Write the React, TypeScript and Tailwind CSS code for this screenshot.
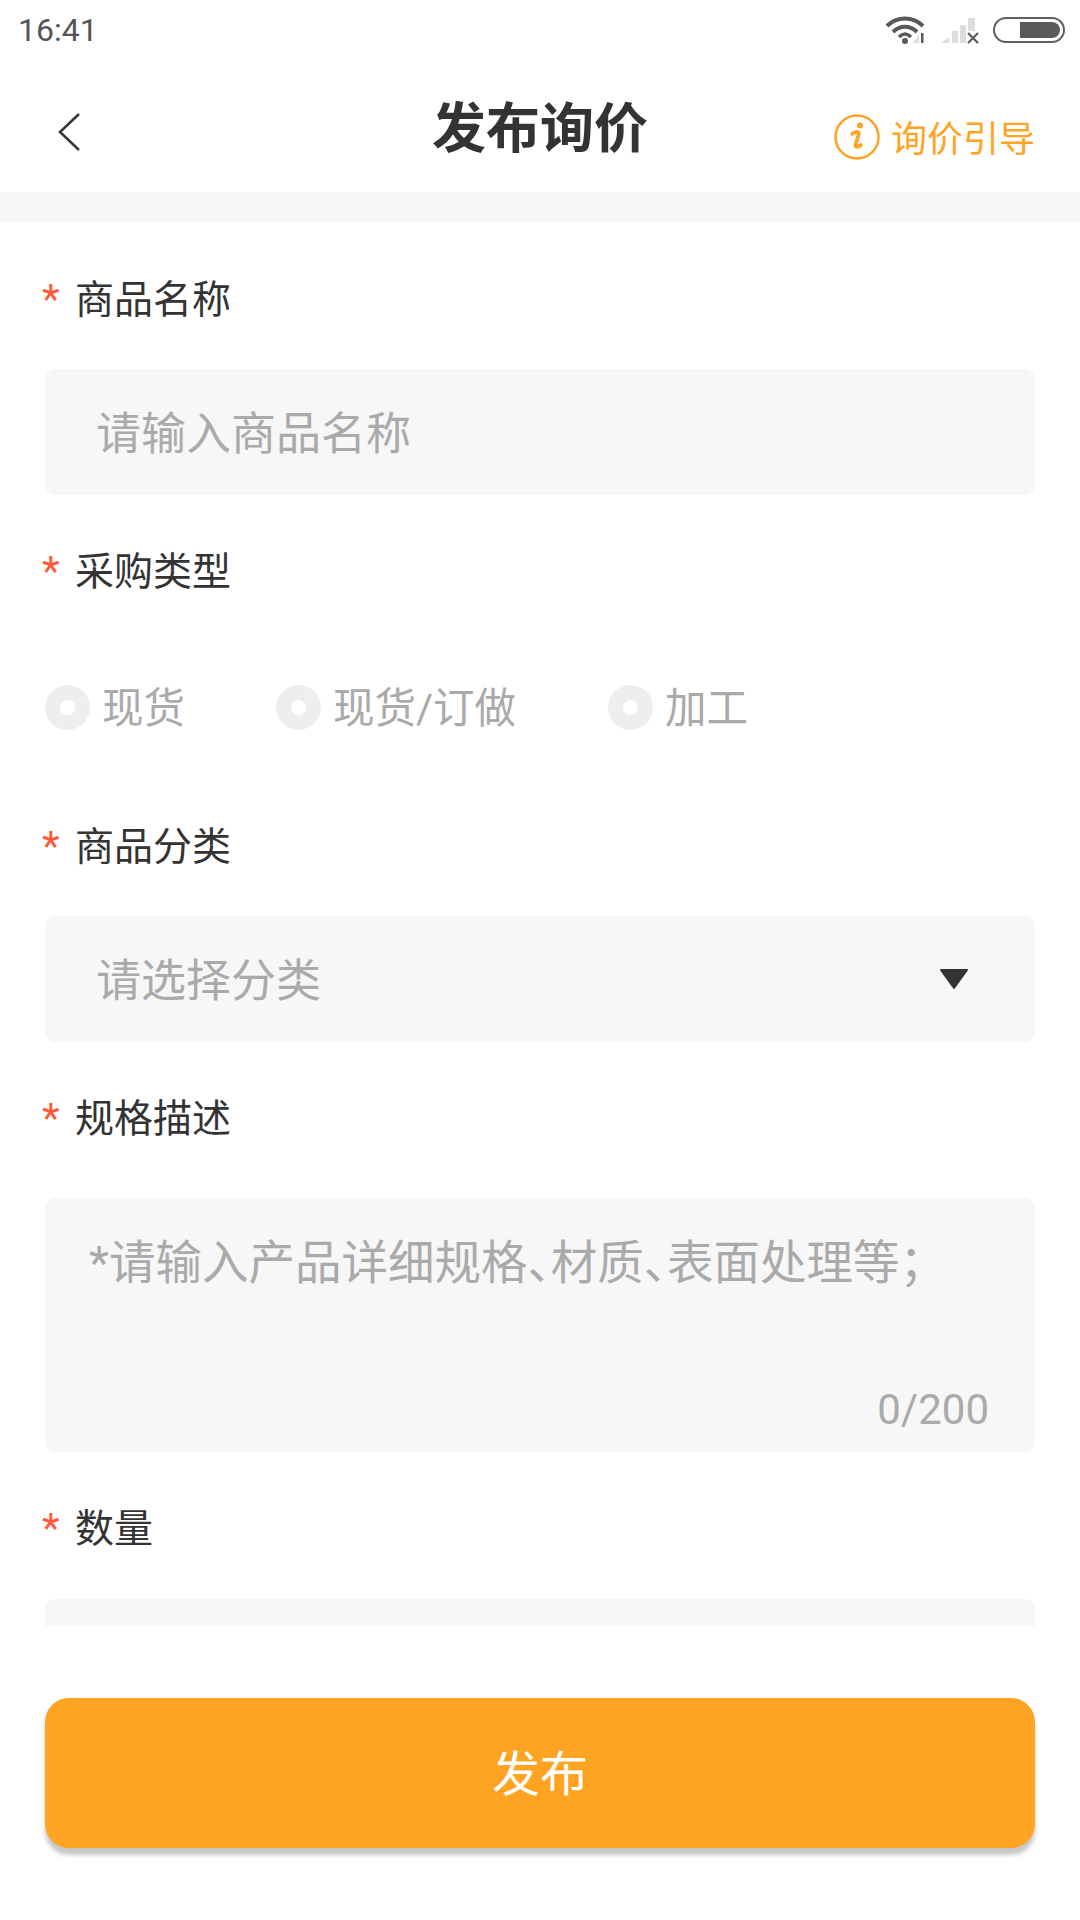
import React from "react";

const cjk = "font-['Roboto','Noto_Sans_CJK_SC',sans-serif]";

function Label({ text }: { text: string }) {
  return (
    <div className="flex h-[72px] items-center pl-[42px]">
      <span className="relative top-[1px] w-[33px] text-[41px] leading-none text-[#ff5a3c]">*</span>
      <span className="relative top-[2px] text-[39px] leading-none text-[#333333]">{text}</span>
    </div>
  );
}

function Radio({ text, className }: { text: string; className: string }) {
  return (
    <div className={`flex items-center ${className}`}>
      <span className="flex h-[45px] w-[45px] items-center justify-center rounded-full bg-[#eeeeee]">
        <span className="h-[15px] w-[15px] rounded-full bg-white" />
      </span>
      <span className="relative top-[1px] ml-[12px] text-[41.5px] leading-none text-[#aaaaaa]">{text}</span>
    </div>
  );
}

export default function App() {
  return (
    <div className={`flex h-[1920px] w-[1080px] flex-col overflow-hidden bg-white ${cjk}`}>
      {/* status bar */}
      <div className="flex h-[60px] items-center justify-between pl-[18px] pr-[15px]">
        <span className="text-[32px] leading-none text-[#555555]">16:41</span>
        <div className="flex items-center">
          <svg width="42" height="30" viewBox="0 0 42 30" fill="none">
            <path d="M2 11 C12 1 28 1 38 11" stroke="#5a5a5a" strokeWidth="4" />
            <path d="M8 17 C15 10 25 10 32 17" stroke="#5a5a5a" strokeWidth="4" />
            <path d="M14 22 C18 18 22 18 26 22" stroke="#5a5a5a" strokeWidth="3.5" />
            <circle cx="20" cy="26" r="3" fill="#5a5a5a" />
            <path d="M28 28 L34 20 V28 Z" fill="#dddddd" />
            <rect x="36" y="18" width="2.5" height="10" fill="#5a5a5a" />
          </svg>
          <svg className="ml-[14px]" width="38" height="28" viewBox="0 0 38 28">
            <path d="M0 27 L8 21 V27 Z" fill="#dddddd" />
            <rect x="11" y="15" width="6" height="12" fill="#dddddd" />
            <rect x="19" y="9" width="6" height="18" fill="#dddddd" />
            <rect x="27" y="2" width="7" height="13" fill="#dddddd" />
            <path d="M27 17 L37 27 M37 17 L27 27" stroke="#5a5a5a" strokeWidth="2.2" />
          </svg>
          <div className="ml-[14px] flex h-[26px] w-[72px] justify-end rounded-full border-2 border-[#5f5f5f] p-[3px]">
            <div className="h-full w-[40px] rounded-r-full bg-[#5a5a5a]" />
          </div>
        </div>
      </div>

      {/* header */}
      <div className="relative flex h-[132px] items-center justify-center">
        <svg className="absolute left-[57px] top-[52px]" width="24" height="40" viewBox="0 0 24 40" fill="none">
          <path d="M22 2 L3 20 L22 38" stroke="#3a3a3a" strokeWidth="2.6" />
        </svg>
        <h1 className="relative top-[4px] text-[54px] font-bold leading-none text-[#333333]">发布询价</h1>
        <div className="absolute right-[45px] top-[54px] flex items-center">
          <svg width="46" height="46" viewBox="0 0 46 46" fill="none">
            <circle cx="23" cy="23" r="21.5" stroke="#ffa323" strokeWidth="2.5" />
            <circle cx="26" cy="11.5" r="3" fill="#ffa323" />
            <path d="M18 20 C20 18 25 17 25 19 L21.5 31 C21 34 24 33.5 27 31" stroke="#ffa323" strokeWidth="3.6" strokeLinecap="round" />
          </svg>
          <span className="relative top-[3px] ml-[11px] text-[36px] leading-none text-[#ffa323]">询价引导</span>
        </div>
      </div>
      <div className="h-[30px] bg-[#f7f7f7]" />

      {/* form */}
      <div className="h-[1404px] overflow-hidden">
        <div className="pt-[40px]">
          <Label text="商品名称" />
          <div className="mx-[45px] mt-[35px] flex h-[126px] items-center rounded-[10px] bg-[#f7f7f7] pl-[51px] pt-[5px] text-[45px] leading-none text-[#aaaaaa]">
            请输入商品名称
          </div>

          <div className="mt-[39px]">
            <Label text="采购类型" />
          </div>
          <div className="mt-[79px] flex h-[45px] px-[45px]">
            <Radio text="现货" className="w-[231px]" />
            <Radio text="现货/订做" className="w-[332px]" />
            <Radio text="加工" className="" />
          </div>

          <div className="mt-[79px]">
            <Label text="商品分类" />
          </div>
          <div className="mx-[45px] mt-[35px] flex h-[126px] items-center justify-between rounded-[10px] bg-[#f7f7f7] pl-[51px] pr-[66px] text-[45px] leading-none text-[#aaaaaa]">
            <span className="relative top-[2px]">请选择分类</span>
            <svg width="30" height="22" viewBox="0 0 30 22">
              <path d="M2 2 H28 L15 20 Z" fill="#333333" stroke="#333333" strokeWidth="2" strokeLinejoin="round" />
            </svg>
          </div>

          <div className="mt-[39px]">
            <Label text="规格描述" />
          </div>
          <div className="mx-[45px] mt-[45px] flex h-[254px] flex-col justify-between rounded-[10px] bg-[#f7f7f7] pb-[21px] pl-[44px] pr-[46px] pt-[42px] text-[#aaaaaa]">
            <div className="whitespace-nowrap text-[46.5px] leading-none [font-feature-settings:'halt']">*请输入产品详细规格、材质、表面处理等；</div>
            <div className="text-right text-[42px] leading-none">0/200</div>
          </div>

          <div className="mt-[39px]">
            <Label text="数量" />
          </div>
          <div className="mx-[45px] mt-[36px] h-[126px] rounded-[10px] bg-[#f7f7f7]" />
        </div>
      </div>

      {/* submit */}
      <div className="px-[45px] pt-[72px]">
        <button className="flex h-[150px] w-full items-center justify-center rounded-[24px] bg-[#ffa323] pt-[3px] text-[48px] text-white shadow-[0_7px_4px_rgba(0,0,0,0.22)]">
          发布
        </button>
      </div>
    </div>
  );
}
